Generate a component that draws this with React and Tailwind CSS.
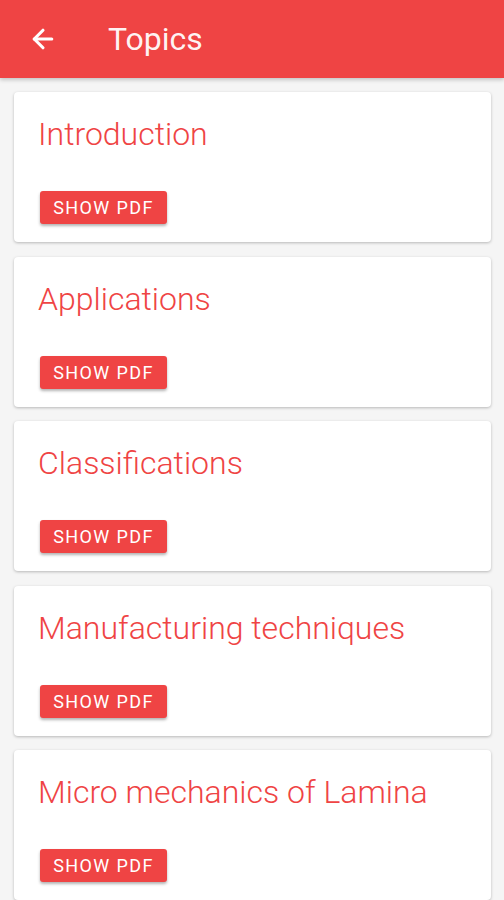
import { ArrowLeft } from 'lucide-react'

const topics = ['Introduction', 'Applications', 'Classifications', 'Manufacturing techniques', 'Micro mechanics of Lamina']

const TopicCard = ({ title }) => (
  <div className="rounded-[4px] bg-white px-6 pt-[24px] pb-[18px] shadow-[0_1px_3px_rgba(0,0,0,0.25)]">
    <h2 className="text-[32px] leading-9 font-light text-[#ef4444]">{title}</h2>
    <button
      className="mt-[39px] ml-[2px] h-[33px] w-[127px] rounded-[3px] bg-[#ef4444] text-[18px] tracking-[1.4px] text-white
        shadow-[0_2px_3px_rgba(0,0,0,0.3)]"
    >
      SHOW PDF
    </button>
  </div>
)

const App = () => (
  <div className="h-[900px] overflow-hidden bg-[#f5f5f5]" style={{ fontFamily: 'Roboto, sans-serif' }}>
    <header className="flex h-[78px] items-center bg-[#ef4444] shadow-[0_2px_4px_rgba(0,0,0,0.2)]">
      <ArrowLeft className="ml-[28px] h-[30px] w-[30px] text-white" strokeWidth={2.5} />
      <h1 className="ml-[50px] text-[32px] text-white/95">Topics</h1>
    </header>
    <div className="flex flex-col gap-[14.5px] pl-[14px] pr-[13px] pt-[14px]">
      {topics.map((t) => (
        <TopicCard key={t} title={t} />
      ))}
    </div>
  </div>
)

export default App
